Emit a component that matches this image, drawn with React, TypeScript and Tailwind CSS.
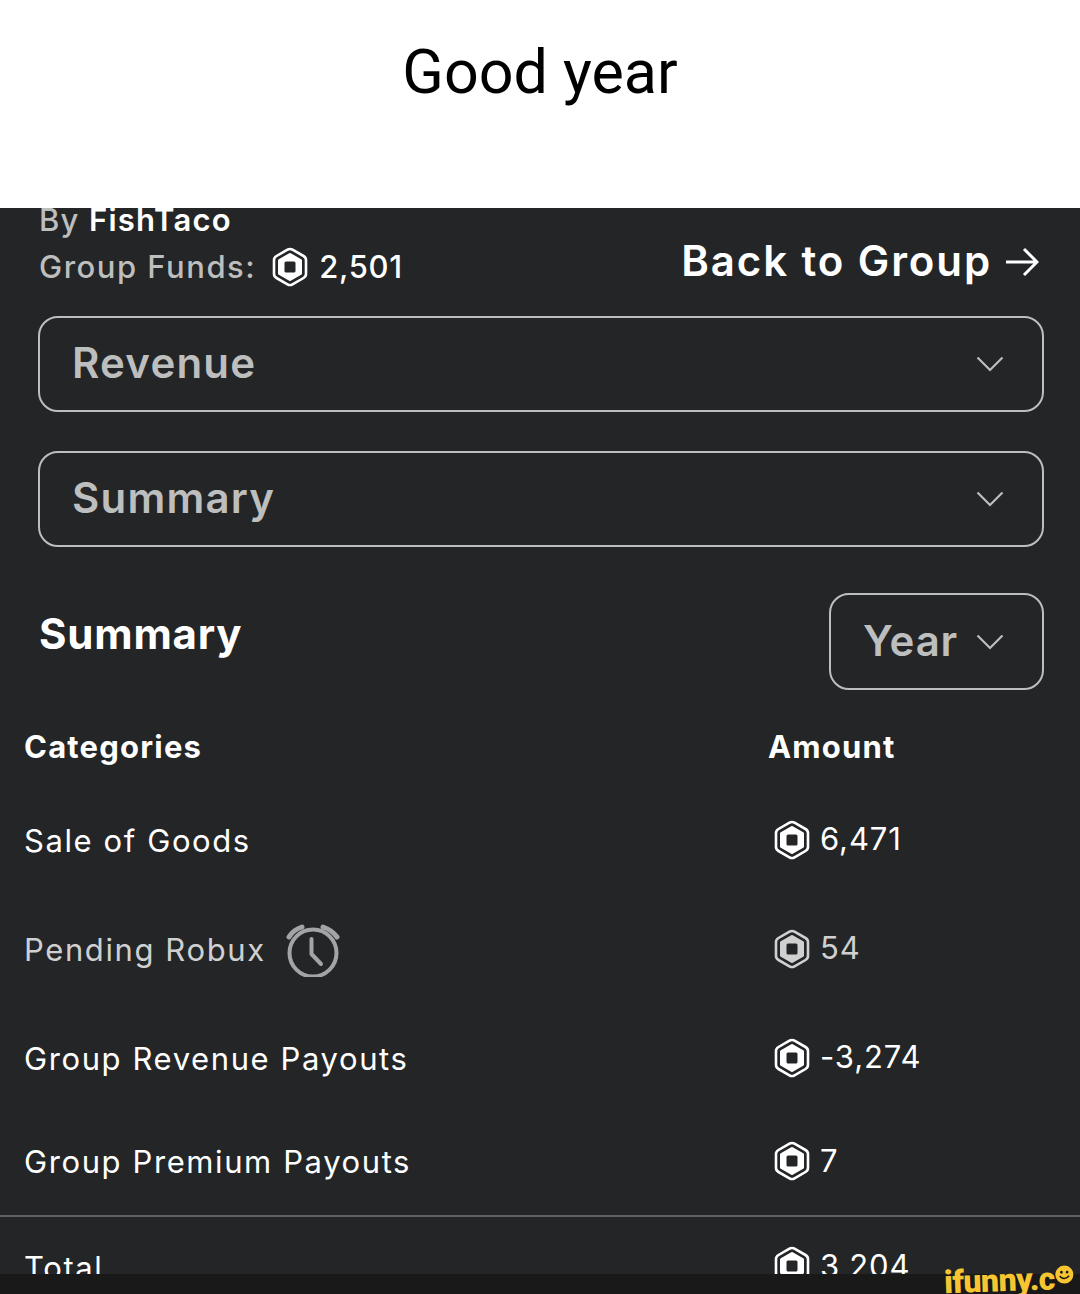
const fontCls = "font-['Inter','Liberation_Sans',sans-serif]";

// Robux hexagon, drawn by hand
function RobuxIcon({ className = "" }: { className?: string }) {
  return (
    <svg viewBox="0 0 36 40" fill="none" className={className}>
      <path
        d="M15.5 2.7 Q18 1.3 20.5 2.7 L31.5 9 Q34 10.5 34 13 V27 Q34 29.5 31.5 31 L20.5 37.3 Q18 38.7 15.5 37.3 L4.500 31 Q2 29.5 2 27 V13 Q2 10.5 4.500 9 Z"
        stroke="currentColor"
        strokeWidth="2.6"
      />
      <path
        d="M18 7.500 L28.500 13.500 V26.500 L18 32.500 L7.500 26.500 V13.500 Z"
        fill="currentColor"
        stroke="currentColor"
        strokeWidth="3"
        strokeLinejoin="round"
      />
      <rect x="12.500" y="14.500" width="11" height="11" rx="1.5" fill="#232527" />
    </svg>
  );
}

function AlarmIcon() {
  return (
    <svg viewBox="0 0 54 54" fill="none" stroke="#a3a4a5" strokeLinecap="round" className="w-[54px] h-[54px]">
      <circle cx="27" cy="30" r="23.500" strokeWidth="4" />
      <path d="M25.500 16 V31 L35 41" strokeWidth="4" strokeLinejoin="round" />
      <path d="M3 14 Q7 7 16 4" strokeWidth="5" />
      <path d="M37 4 Q46 7 51 14" strokeWidth="5" />
    </svg>
  );
}

function Chevron() {
  return (
    <svg viewBox="0 0 28 16" fill="none" stroke="#bdbebe" strokeWidth="2.2" className="w-[28px] h-[16px]">
      <path d="M1.500 1.500 L14 14 L26.500 1.500" />
    </svg>
  );
}

function Dropdown({ label }: { label: string }) {
  return (
    <div className="h-[96px] ml-[38px] mr-[36px] flex items-center justify-between pl-[32px] pr-[38px] rounded-[20px] border-2 border-[#bdbebe]">
      <span className="mb-[4px] text-[42px] font-semibold text-[#bdbebe] tracking-[1.2px]">{label}</span>
      <Chevron />
    </div>
  );
}

const rows = [
  { label: "Sale of Goods", amount: "6,471", height: "h-[108px]", extra: "", muted: false },
  { label: "Pending Robux", amount: "54", height: "h-[110px]", extra: "", muted: true },
  { label: "Group Revenue Payouts", amount: "-3,274", height: "h-[108px]", extra: "", muted: false },
  { label: "Group Premium Payouts", amount: "7", height: "h-[102px]", extra: "pb-[3px]", muted: false },
];

export default function App() {
  return (
    <div className={`w-[1080px] h-[1294px] flex flex-col relative bg-white ${fontCls}`}>
      {/* Caption */}
      <div className="h-[208px] flex justify-center pt-[32px] shrink-0">
        <h1 className="font-['Roboto',sans-serif] text-[61px] leading-[80px] text-black">Good year</h1>
      </div>

      {/* Screenshot */}
      <div className="h-[1066px] overflow-hidden bg-[#232527] shrink-0">
        <div className="-mt-[8px] pl-[39px] pr-[41px] flex justify-between items-start">
          <div>
            <div className="text-[31px] leading-[40px] font-medium text-[#bdbebe] tracking-[1.2px]">
              By <span className="text-white font-semibold">FishTaco</span>
            </div>
            <div className="mt-[7px] flex items-center text-[31px] leading-[40px] font-medium text-[#bdbebe] tracking-[1.5px]">
              Group Funds:
              <RobuxIcon className="w-[36px] h-[40px] ml-[16px] mr-[11px] text-white" />
              <span className="text-white font-medium tracking-[0.7px]">2,501</span>
            </div>
          </div>
          <div className="mt-[33px] flex items-center gap-[13px] text-[42px] leading-[56px] font-semibold text-white tracking-[1.9px]">
            Back to Group
            <svg viewBox="0 0 34 30" fill="none" stroke="white" strokeWidth="3" className="w-[34px] h-[30px] mt-[2px]">
              <path d="M1 15 H32 M19 2 L32 15 L19 28" />
            </svg>
          </div>
        </div>

        <div className="mt-[27px]">
          <Dropdown label="Revenue" />
        </div>
        <div className="mt-[39px]">
          <Dropdown label="Summary" />
        </div>

        <div className="mt-[46px] ml-[39px] mr-[36px] flex items-center justify-between">
          <h2 className="mb-[16px] text-[42px] font-bold text-white tracking-[0.8px]">Summary</h2>
          <div className="w-[215px] h-[97px] rounded-[20px] border-2 border-[#bdbebe] flex items-center pl-[32px] gap-[18px]">
            <span className="mb-[3px] text-[42px] font-semibold text-[#bdbebe] tracking-[0.8px]">Year</span>
            <Chevron />
          </div>
        </div>

        <div className="mt-[27px] h-[60px] pl-[24px] flex items-center text-[31px] font-bold text-white tracking-[1.2px]">
          <div className="w-[744px]">Categories</div>
          <div>Amount</div>
        </div>

        <div className="mt-[10px]">
          {rows.map((row) => (
            <div key={row.label} className={`${row.height} ${row.extra} pl-[24px] flex items-center text-[31px] ${row.muted ? "text-[#d0d0d1]" : "text-white"}`}>
              <div className="w-[750px] flex items-center gap-[20px] tracking-[1.6px]">
                {row.label}
                {row.muted && <AlarmIcon />}
              </div>
              <div className="flex items-center mb-[3px] tracking-[0.9px]">
                <RobuxIcon className={`w-[36px] h-[40px] mr-[10px] ${row.muted ? "text-[#d0d0d1]" : "text-white"}`} />
                <span>{row.amount}</span>
              </div>
            </div>
          ))}
        </div>

        <div className="h-[2px] bg-[#5f6061]" />

        <div className="mt-[26px] pl-[24px] flex items-center text-[31px] text-white">
          <div className="w-[750px] tracking-[1.6px]">Total</div>
          <div className="flex items-center mb-[4px] tracking-[0.9px]">
            <RobuxIcon className="w-[36px] h-[40px] mr-[10px] text-white" />
            <span>3,204</span>
          </div>
        </div>
      </div>

      {/* Watermark strip */}
      <div className="h-[20px] bg-[#19191a] shrink-0" />
      <div className="absolute right-[6px] bottom-0 h-[28px] flex items-center -rotate-[2deg] font-['Roboto',sans-serif] text-[32px] font-black leading-[28px] text-[#f7c531] tracking-[-0.5px]">
        ifunny.c
        <svg viewBox="0 0 20 20" className="w-[19px] h-[19px] -mt-[8px]">
          <circle cx="10" cy="10" r="9.500" fill="#f7c531" />
          <circle cx="7" cy="7.500" r="1.500" fill="#19191a" />
          <circle cx="13" cy="7.500" r="1.500" fill="#19191a" />
          <path d="M5 11.500 Q10 17 15 11.500" stroke="#19191a" strokeWidth="1.6" fill="none" />
        </svg>
      </div>
    </div>
  );
}
